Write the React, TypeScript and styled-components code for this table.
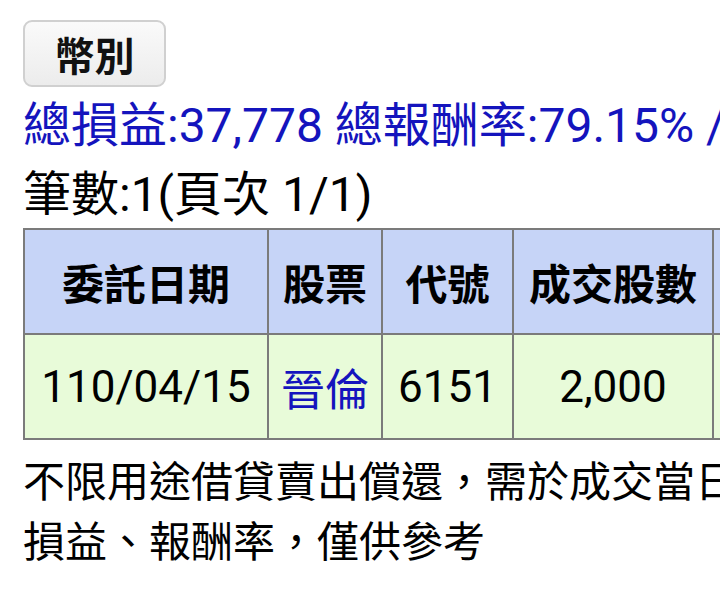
import React from "react";
import styled, { createGlobalStyle } from "styled-components";

const Global = createGlobalStyle`
  html, body {
    margin: 0;
    padding: 0;
    background: #ffffff;
    overflow: hidden;
  }
  body {
    font-family: Roboto, "Noto Sans CJK TC", sans-serif;
    color: #000;
  }
`;

const Page = styled.div`
  padding: 20px 0 0 23px;
  width: 1200px;
`;

const CurrencyButton = styled.button`
  display: flex;
  align-items: center;
  justify-content: center;
  width: 143px;
  height: 67px;
  border: 2px solid #d0d0d0;
  border-radius: 9px;
  background: linear-gradient(#fafafa, #ececec);
  font-family: Roboto, "Noto Sans CJK TC", sans-serif;
  font-size: 40px;
  font-weight: 700;
  color: #111;
  padding: 0;
`;

const InfoLine = styled.div<{ $blue?: boolean; $lh: number }>`
  font-size: 48px;
  line-height: ${(p) => p.$lh}px;
  white-space: nowrap;
  color: ${(p) => (p.$blue ? "#1414bd" : "#000")};
`;

const Summary = styled.div`
  margin-top: 3px;
  display: flex;
  flex-direction: column;
`;

const Table = styled.table`
  border-collapse: collapse;
  table-layout: fixed;
  width: 889px;
`;

const HeadCell = styled.th<{ $w: number }>`
  width: ${(p) => p.$w}px;
  height: 105px;
  box-sizing: border-box;
  border: 2px solid #7b7b7b;
  background: #c6d4f7;
  font-size: 42px;
  font-weight: 700;
  text-align: center;
  padding: 0;
  white-space: nowrap;
`;

const DataCell = styled.td<{ $link?: boolean }>`
  height: 105px;
  box-sizing: border-box;
  border: 2px solid #7b7b7b;
  background: #e8fbd9;
  font-size: 44px;
  text-align: center;
  padding: 0;
  white-space: nowrap;
  color: ${(p) => (p.$link ? "#1414bd" : "#000")};
`;

const Note = styled.div`
  margin-top: 9px;
  font-size: 42px;
  line-height: 60px;
  white-space: nowrap;
  font-family: "Noto Sans CJK TC", sans-serif;
`;

const columns = [
  { label: "委託日期", w: 244 },
  { label: "股票", w: 114 },
  { label: "代號", w: 131 },
  { label: "成交股數", w: 200 },
  { label: "", w: 200 },
];

export default function App() {
  return (
    <>
      <Global />
      <Page>
        <CurrencyButton>幣別</CurrencyButton>
        <Summary>
          <InfoLine $blue $lh={72}>總損益:37,778 總報酬率:79.15% /</InfoLine>
          <InfoLine $lh={66}>筆數:1(頁次 1/1)</InfoLine>
        </Summary>
        <Table>
          <thead>
            <tr>
              {columns.map((c, i) => (
                <HeadCell key={i} $w={c.w}>
                  {c.label}
                </HeadCell>
              ))}
            </tr>
          </thead>
          <tbody>
            <tr>
              <DataCell>110/04/15</DataCell>
              <DataCell $link>晉倫</DataCell>
              <DataCell>6151</DataCell>
              <DataCell>2,000</DataCell>
              <DataCell></DataCell>
            </tr>
          </tbody>
        </Table>
        <Note>
          不限用途借貸賣出償還，需於成交當日
          <br />
          損益、報酬率，僅供參考
        </Note>
      </Page>
    </>
  );
}
